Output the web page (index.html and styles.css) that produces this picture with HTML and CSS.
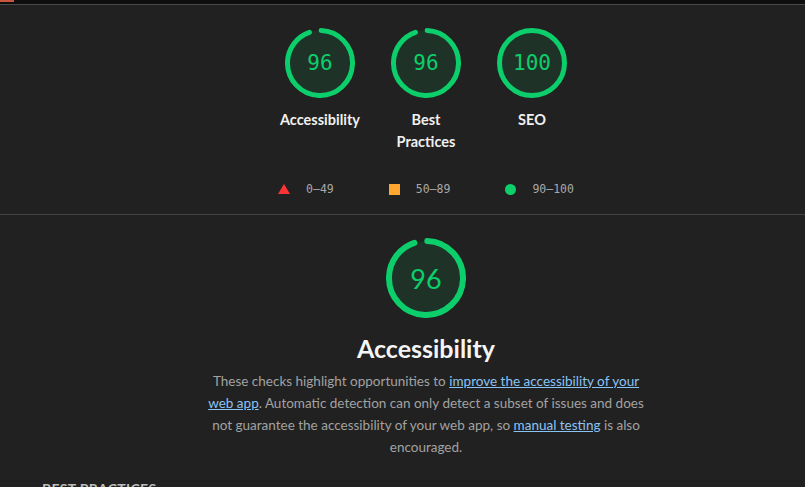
FILE: index.html
```html
<!DOCTYPE html>
<html lang="en">
<head>
<meta charset="utf-8">
<title>Lighthouse Report</title>
<link rel="stylesheet" href="styles.css">
</head>
<body>
<div class="topbar"><div class="topbar-progress"></div></div>

<main class="report">
<section class="summary">
  <div class="gauges">
    <a class="gauge-wrap">
      <div class="gauge">
        <svg viewBox="0 0 70 70" width="70" height="70">
          <circle class="gauge-base" cx="35" cy="35" r="32.5"/>
          <circle class="gauge-arc" cx="35" cy="35" r="32.5" stroke-dasharray="192 300" transform="rotate(-88 35 35)"/>
        </svg>
        <span class="gauge-score">96</span>
      </div>
      <div class="gauge-label">Accessibility</div>
    </a>
    <a class="gauge-wrap">
      <div class="gauge">
        <svg viewBox="0 0 70 70" width="70" height="70">
          <circle class="gauge-base" cx="35" cy="35" r="32.5"/>
          <circle class="gauge-arc" cx="35" cy="35" r="32.5" stroke-dasharray="192 300" transform="rotate(-88 35 35)"/>
        </svg>
        <span class="gauge-score">96</span>
      </div>
      <div class="gauge-label">Best Practices</div>
    </a>
    <a class="gauge-wrap">
      <div class="gauge">
        <svg viewBox="0 0 70 70" width="70" height="70">
          <circle class="gauge-base" cx="35" cy="35" r="32.5"/>
          <circle class="gauge-arc" cx="35" cy="35" r="32.5"/>
        </svg>
        <span class="gauge-score">100</span>
      </div>
      <div class="gauge-label">SEO</div>
    </a>
  </div>
  <div class="legend">
    <span class="legend-item"><svg class="legend-icon" viewBox="0 0 12 12" width="12" height="12"><polygon points="6,1 12,11 0,11" fill="#ff3333"/></svg>0–49</span>
    <span class="legend-item"><span class="legend-square"></span>50–89</span>
    <span class="legend-item"><span class="legend-circle"></span>90–100</span>
  </div>
</section>

<section class="category">
  <div class="big-gauge">
    <svg viewBox="0 0 80 80" width="80" height="80">
      <circle class="gauge-base" cx="40" cy="40" r="37"/>
      <circle class="gauge-arc big-arc" cx="40" cy="40" r="37" stroke-dasharray="219 300" transform="rotate(-88 40 40)"/>
    </svg>
    <span class="big-score">96</span>
  </div>
  <h2 class="category-title">Accessibility</h2>
  <p class="category-desc">These checks highlight opportunities to <a href="#">improve the accessibility of your web app</a>. Automatic detection can only detect a subset of issues and does not guarantee the accessibility of your web app, so <a href="#">manual testing</a> is also encouraged.</p>
  <div class="group-title">BEST PRACTICES</div>
</section>
</main>
</body>
</html>
```

FILE: styles.css
```css
* { box-sizing: border-box; }
body {
  margin: 0;
  background: #212121;
  font-family: "Lato", "Noto Sans", sans-serif;
  color: #f5f5f5;
  overflow: hidden;
}
.topbar {
  height: 5px;
  background: #0e0e0e;
  border-bottom: 1px solid #4a4a4a;
}
.topbar-progress {
  width: 14px;
  height: 2px;
  background: #c9553a;
}
.report {
  width: 852px;
}
.summary {
  padding-top: 23px;
  border-bottom: 1px solid #444;
}
.gauges {
  display: flex;
  justify-content: center;
}
.gauge-wrap {
  width: 106px;
  display: flex;
  flex-direction: column;
  align-items: center;
}
.gauge {
  position: relative;
  width: 70px;
  height: 70px;
}
.gauge svg { display: block; }
.gauge-base {
  fill: rgba(12, 206, 107, 0.1);
  stroke: none;
}
.gauge-arc {
  fill: none;
  stroke: #0cce6b;
  stroke-width: 5;
  stroke-linecap: round;
}
.big-arc { stroke-width: 6; }
.gauge-score {
  position: absolute;
  inset: 0;
  display: flex;
  align-items: center;
  justify-content: center;
  font-family: "DejaVu Sans Mono", monospace;
  font-size: 21px;
  color: #0cce6b;
}
.gauge-label {
  margin-top: 11px;
  width: 88px;
  text-align: center;
  font-size: 14.5px;
  font-weight: 700;
  line-height: 22px;
  color: #f0f0f0;
}
.legend {
  display: flex;
  justify-content: center;
  gap: 55px;
  margin-top: 28px;
  padding-bottom: 17px;
  font-family: "DejaVu Sans Mono", monospace;
  font-size: 11.5px;
  line-height: 16px;
  color: #a8a8a8;
}
.legend-item {
  display: flex;
  align-items: center;
}
.legend-icon, .legend-square, .legend-circle {
  margin-right: 16px;
  flex: none;
}
.legend-square {
  width: 11px;
  height: 11px;
  background: #ffa631;
}
.legend-circle {
  width: 11px;
  height: 11px;
  border-radius: 50%;
  background: #0cce6b;
}
.category {
  display: flex;
  flex-direction: column;
  align-items: center;
  padding-top: 23px;
}
.big-gauge {
  position: relative;
  width: 80px;
  height: 80px;
}
.big-gauge svg { display: block; }
.big-score {
  position: absolute;
  inset: 0;
  display: flex;
  align-items: center;
  justify-content: center;
  font-size: 27px;
  color: #0cce6b;
}
.category-title {
  margin: 13px 0 0;
  font-size: 25px;
  font-weight: 700;
  line-height: 34px;
  color: #f5f5f5;
}
.category-desc {
  margin: 5px 0 0;
  width: 444px;
  text-align: center;
  font-size: 13.5px;
  line-height: 22px;
  color: #a2a2a2;
}
.category-desc a {
  color: #8ac4f5;
  text-decoration: underline;
}
.group-title {
  align-self: flex-start;
  margin: 21px 0 0 42px;
  font-size: 14px;
  font-weight: 700;
  line-height: 20px;
  color: #bdbdbd;
  letter-spacing: 0.3px;
}
```
